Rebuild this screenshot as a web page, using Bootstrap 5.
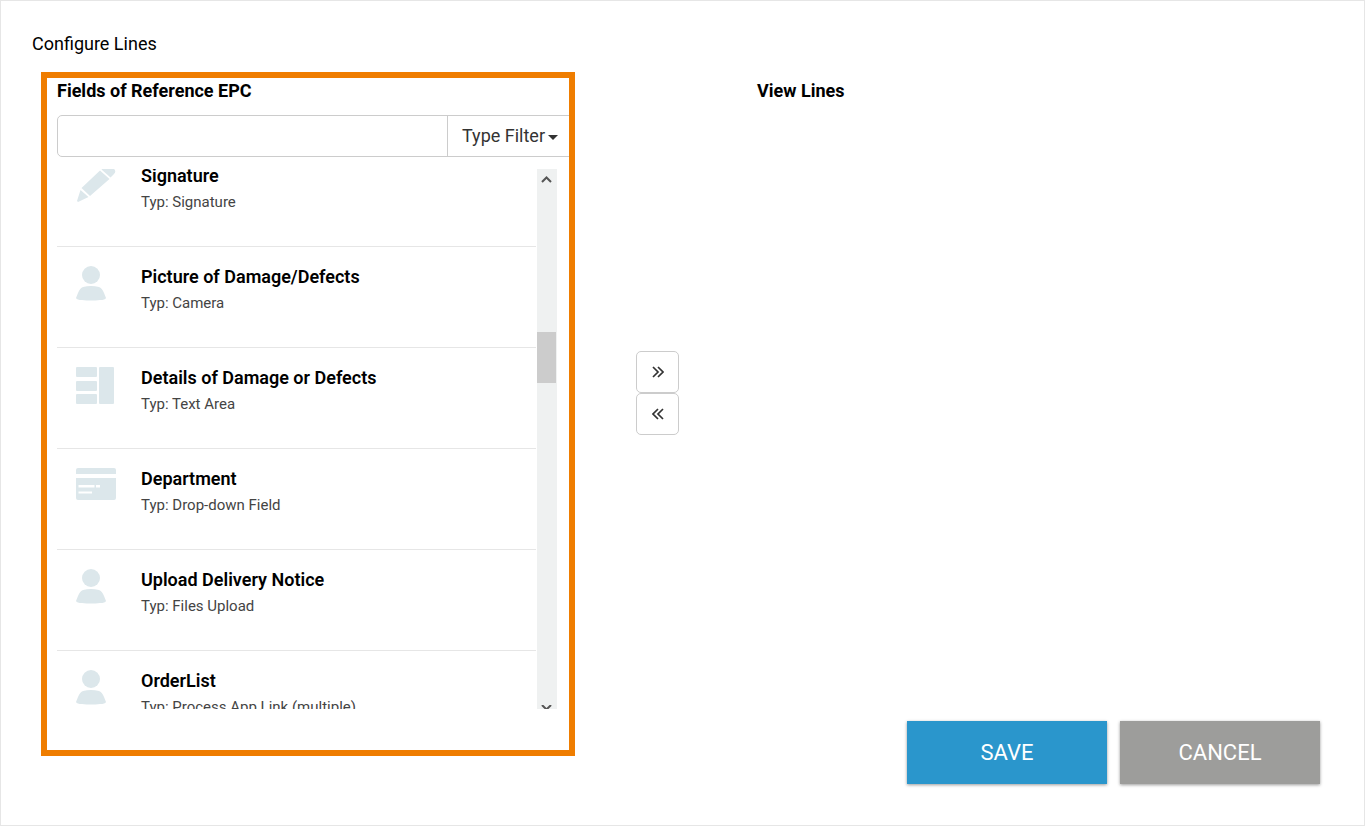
<!DOCTYPE html>
<html lang="en">
<head>
<meta charset="utf-8">
<meta name="viewport" content="width=device-width, initial-scale=1">
<title>Configure Lines</title>
<link href="https://cdn.jsdelivr.net/npm/bootstrap@5.3.0/dist/css/bootstrap.min.css" rel="stylesheet">
<style>
  body { font-family: Roboto, "Liberation Sans", sans-serif; font-size: 18px; line-height: 24px; color: #000; }
  .dialog-frame { border: 1px solid #e6e6e6; padding: 31px 44px 40px 40px; }
  .dialog-title { font-size: 18px; line-height: 24px; font-weight: 400; margin: 0 0 16px -9px; }
  .pane-title { font-size: 18px; line-height: 24px; font-weight: 700; margin: 0; }
  .columns { display: grid; grid-template-columns: 534fr 165fr 580fr; }
  .source-pane { border: 6px solid #ef7d00; padding: 1px 12px 41px 10px; }
  .view-pane { padding: 7px 17px; }
  .filter-bar { margin: 12px -12px 12px 0; width: auto; }
  .filter-bar .form-control { height: 42px; border-color: #ccc; border-radius: 5px; font-size: 18px; }
  .filter-bar .btn { height: 42px; padding: 0 11px 0 14px; border: 1px solid #ccc; border-right: 0; border-radius: 0; font-size: 18px; line-height: 24px; color: #333; }
  .filter-bar .dropdown-toggle::after { border-width: 5px 5px 0; margin-left: 3px; vertical-align: 2px; }
  .scroll-box { height: 540px; }
  .field-list { margin: -23px 1px 0 0; }
  .field-row { height: 101px; padding: 18px 19px; border-bottom: 1px solid #e6e6e6; }
  .field-icon { width: 65px; }
  .field-icon svg { display: block; fill: #dce7eb; }
  .field-name { font-size: 18px; line-height: 24px; font-weight: 600; }
  .field-type { font-size: 15px; line-height: 20px; margin-top: 4px; color: #444; }
  .track { width: 20px; background: #eff1f1; }
  .track svg { display: block; fill: none; stroke: #555; stroke-width: 2; }
  .thumb { width: 19px; height: 51px; margin-top: 143px; background: #ccc; }
  .move-column { padding-bottom: 42px; }
  .move-btn { width: 43px; height: 42px; padding: 0; border: 1px solid #ccc; border-radius: 5px; background: #fff; }
  .move-btn svg { display: block; margin: auto; fill: none; stroke: #333; stroke-width: 1.7; }
  .action-row { gap: 13px; margin-top: -35px; }
  .action-btn { width: 200px; height: 63px; border: 0; border-radius: 0; font-size: 22px; color: #fff; box-shadow: 0 1px 3px rgba(0,0,0,.4); }
  .action-save { background: #2a96cc; }
  .action-cancel { background: #9d9d9b; }
</style>
</head>
<body>
<svg class="d-none" aria-hidden="true">
  <symbol id="person" viewBox="0 0 30 36"><circle cx="15" cy="10" r="9"/><path d="M7 22Q15 20 23 22Q26 23 28 28L30 33Q29 35 24 35Q15 36 6 35Q1 35 0 33L2 28Q4 23 7 22Z"/></symbol>
</svg>
<main class="dialog-frame min-vh-100 d-flex flex-column">
  <h1 class="dialog-title">Configure Lines</h1>
  <div class="columns">
    <section class="source-pane overflow-hidden">
      <h2 class="pane-title">Fields of Reference EPC</h2>
      <div class="input-group filter-bar">
        <input type="text" class="form-control" aria-label="Search fields">
        <button type="button" class="btn dropdown-toggle" data-bs-toggle="dropdown">Type Filter</button>
      </div>
      <div class="scroll-box d-flex overflow-hidden">
        <ul class="field-list list-unstyled flex-grow-1">
          <li class="field-row d-flex">
            <div class="field-icon"><svg width="40" height="40" viewBox="0 0 40 40"><path d="M26 5L29 3Q34 1 37 4Q41 7 38 10L34.500 13.500L25.500 5.500ZM24 6.500L33.500 15L14 32L5.500 24ZM4.500 26L12.500 33L2 38L1 37Z"/></svg></div>
            <div><div class="field-name">Signature</div><div class="field-type">Typ: Signature</div></div>
          </li>
          <li class="field-row d-flex">
            <div class="field-icon"><svg width="30" height="36"><use href="#person"/></svg></div>
            <div><div class="field-name">Picture of Damage/Defects</div><div class="field-type">Typ: Camera</div></div>
          </li>
          <li class="field-row d-flex">
            <div class="field-icon"><svg width="38" height="39" viewBox="0 0 38 39"><rect y="1" width="21" height="10" rx="1"/><rect y="15" width="21" height="10" rx="1"/><rect y="28" width="21" height="10" rx="1"/><rect x="23" y="1" width="15" height="37" rx="1"/></svg></div>
            <div><div class="field-name">Details of Damage or Defects</div><div class="field-type">Typ: Text Area</div></div>
          </li>
          <li class="field-row d-flex">
            <div class="field-icon"><svg width="40" height="34" viewBox="0 0 40 34"><path fill-rule="evenodd" d="M2 1H38Q40 1 40 3V7H0V3Q0 1 2 1ZM0 11H40V31Q40 33 38 33H2Q0 33 0 31ZM2.500 18V20.500H18.500V18ZM20 18V20.500H24V18ZM2.500 24.500V26.500H16V24.500Z"/></svg></div>
            <div><div class="field-name">Department</div><div class="field-type">Typ: Drop-down Field</div></div>
          </li>
          <li class="field-row d-flex">
            <div class="field-icon"><svg width="30" height="36"><use href="#person"/></svg></div>
            <div><div class="field-name">Upload Delivery Notice</div><div class="field-type">Typ: Files Upload</div></div>
          </li>
          <li class="field-row d-flex">
            <div class="field-icon"><svg width="30" height="36"><use href="#person"/></svg></div>
            <div><div class="field-name">OrderList</div><div class="field-type">Typ: Process App Link (multiple)</div></div>
          </li>
        </ul>
        <div class="track d-flex flex-column" aria-hidden="true">
          <svg width="20" height="20"><path d="M5 13L9.500 8.500L14 13"/></svg>
          <div class="thumb"></div>
          <svg class="mt-auto" width="20" height="4"><path d="M5 0L9.500 4.500L14 0"/></svg>
        </div>
      </div>
    </section>
    <div class="move-column d-flex flex-column align-items-center justify-content-center">
      <button type="button" class="move-btn" aria-label="Add to view"><svg width="12" height="12"><path d="M1 1L6 6L1 11M6 1L11 6L6 11"/></svg></button>
      <button type="button" class="move-btn" aria-label="Remove from view"><svg width="12" height="12"><path d="M6 1L1 6L6 11M11 1L6 6L11 11"/></svg></button>
    </div>
    <section class="view-pane d-flex flex-column">
      <h2 class="pane-title">View Lines</h2>
    </section>
  </div>
  <div class="action-row d-flex justify-content-end">
    <button type="button" class="btn action-btn action-save">SAVE</button>
    <button type="button" class="btn action-btn action-cancel">CANCEL</button>
  </div>
</main>
<script src="https://cdn.jsdelivr.net/npm/bootstrap@5.3.0/dist/js/bootstrap.bundle.min.js"></script>
</body>
</html>
